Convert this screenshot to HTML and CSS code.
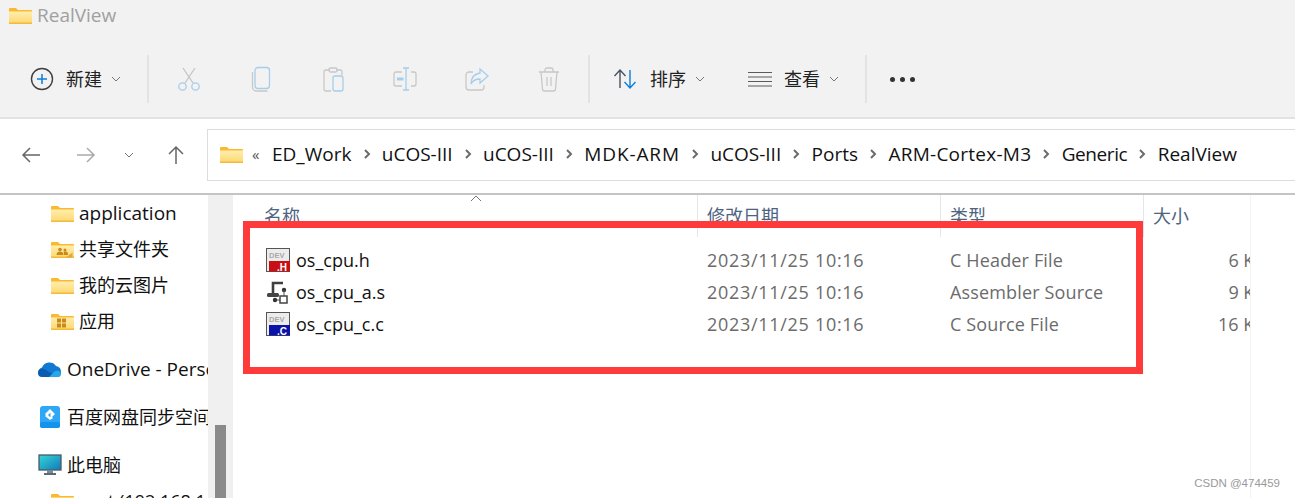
FILE: index.html
```html
<!DOCTYPE html>
<html lang="zh">
<head>
<meta charset="utf-8">
<title>RealView</title>
<link rel="stylesheet" href="styles.css">
</head>
<body>
<svg class="defs" aria-hidden="true">
  <defs>
    <linearGradient id="fg" x1="0" y1="0" x2="0" y2="1"><stop offset="0" stop-color="#ffeeb0"/><stop offset="1" stop-color="#fdd86f"/></linearGradient>
    <linearGradient id="scr" x1="0" y1="0" x2="1" y2="1"><stop offset="0" stop-color="#35d6d8"/><stop offset="1" stop-color="#1278b8"/></linearGradient>
    <symbol id="folder" viewBox="0 0 23 17">
      <path d="M0 2a1 1 0 0 1 1-1h6l2 2h13a1 1 0 0 1 1 1v12a1 1 0 0 1-1 1H1a1 1 0 0 1-1-1z" fill="#fbb92e"/>
      <path d="M0 4.500h23V15.500a1 1 0 0 1-1 1H1a1 1 0 0 1-1-1z" fill="url(#fg)"/>
      <rect y="15.500" width="23" height="1.500" fill="#f5b93c"/>
    </symbol>
    <symbol id="chev" viewBox="0 0 8 12"><path d="M2 2l4 4-4 4" fill="none" stroke="#6b6b6b" stroke-width="2"/></symbol>
    <symbol id="down" viewBox="0 0 10 6"><path d="M1 1l4 4 4-4" fill="none" stroke="#777" stroke-width="1"/></symbol>
  </defs>
</svg>

<div class="ribbon">
  <div class="title">
    <svg class="ic-folder"><use href="#folder"/></svg>
    <span>RealView</span>
  </div>
  <div class="tools">
    <div class="tool tool-new">
      <svg class="ic24" viewBox="0 0 24 24"><circle cx="12" cy="12" r="10.500" fill="none" stroke="#3f3f3f" stroke-width="1.400"/><path d="M12 7v10M7 12h10" stroke="#0f7fd6" stroke-width="1.500"/></svg>
      <span>新建</span>
      <svg class="ic-down"><use href="#down"/></svg>
    </div>
    <i class="sep"></i>
    <div class="icons">
      <div class="icon-btn"><svg class="ic26" viewBox="0 0 26 26"><path d="M7 2l10 15M19 2L9 17" fill="none" stroke="#c4c4c4" stroke-width="1.300"/><circle cx="6.500" cy="20.500" r="3.700" fill="none" stroke="#a5cdec" stroke-width="1.300"/><circle cx="19.500" cy="20.500" r="3.700" fill="none" stroke="#a5cdec" stroke-width="1.300"/></svg></div>
      <div class="icon-btn"><svg class="ic26" viewBox="0 0 26 26"><path d="M4.500 6v15a4 4 0 0 0 4 4h11" fill="none" stroke="#c8c8c8" stroke-width="1.300"/><rect x="7" y="1.500" width="14.500" height="21" rx="3" fill="none" stroke="#a5cdec" stroke-width="1.300"/></svg></div>
      <div class="icon-btn"><svg class="ic26" viewBox="0 0 26 26"><path d="M10 4H6a2 2 0 0 0-2 2v17a2 2 0 0 0 2 2h5M16 4h4a2 2 0 0 1 2 2v3" fill="none" stroke="#c8c8c8" stroke-width="1.300"/><rect x="9" y="2" width="8" height="4" rx="1.500" fill="none" stroke="#c8c8c8" stroke-width="1.300"/><rect x="13" y="10" width="10" height="15" rx="2" fill="none" stroke="#a5cdec" stroke-width="1.300"/></svg></div>
      <div class="icon-btn"><svg class="ic26" viewBox="0 0 26 26"><path d="M10 6H4a2 2 0 0 0-2 2v10a2 2 0 0 0 2 2h6M19 6h3a2 2 0 0 1 2 2v10a2 2 0 0 1-2 2h-3" fill="none" stroke="#c8c8c8" stroke-width="1.300"/><path d="M11 2h6M14 2v22M11 24h6" fill="none" stroke="#a5cdec" stroke-width="1.300"/><rect x="5" y="11.500" width="6.500" height="3" fill="#a5cdec"/></svg></div>
      <div class="icon-btn"><svg class="ic26" viewBox="0 0 26 26"><path d="M9 6H5a3 3 0 0 0-3 3v12a3 3 0 0 0 3 3h12a3 3 0 0 0 3-3v-2" fill="none" stroke="#c8c8c8" stroke-width="1.300"/><path d="M16 3l8 7-8 7v-4c-4 0-7 1-9 5 0-6 3-10 9-11z" fill="none" stroke="#a5cdec" stroke-width="1.300"/></svg></div>
      <div class="icon-btn"><svg class="ic26" viewBox="0 0 26 26"><path d="M3 6h20M9 6V4a2 2 0 0 1 2-2h4a2 2 0 0 1 2 2v2M5 6l1.500 17a2 2 0 0 0 2 2h9a2 2 0 0 0 2-2L21 6M11 11v9M15 11v9" fill="none" stroke="#c8c8c8" stroke-width="1.300"/></svg></div>
    </div>
    <i class="sep"></i>
    <div class="tool tool-sort">
      <svg class="ic26" viewBox="0 0 26 26"><path d="M7 22V4M1.500 10L7 4l5.500 6" fill="none" stroke="#4a5560" stroke-width="1.400"/><path d="M17 4v18M11.500 16l5.500 6 5.500-6" fill="none" stroke="#0f7fd6" stroke-width="1.400"/></svg>
      <span>排序</span>
      <svg class="ic-down"><use href="#down"/></svg>
    </div>
    <div class="tool tool-view">
      <svg class="ic24" viewBox="0 0 24 24"><path d="M0 5.500h24M0 10h24M0 14.500h24M0 19h24" fill="none" stroke="#5a5a5a" stroke-width="1"/></svg>
      <span>查看</span>
      <svg class="ic-down"><use href="#down"/></svg>
    </div>
    <i class="sep"></i>
    <div class="more"><b></b><b></b><b></b></div>
  </div>
</div>

<div class="nav">
  <div class="nav-btns">
    <svg class="nav-back" viewBox="0 0 20 20"><path d="M19 10H2M9 3l-7 7 7 7" fill="none" stroke="#666" stroke-width="1.500"/></svg>
    <svg class="nav-fwd" viewBox="0 0 20 20"><path d="M1 10h17M11 3l7 7-7 7" fill="none" stroke="#aaa" stroke-width="1.500"/></svg>
    <svg class="nav-hist"><use href="#down"/></svg>
    <svg class="nav-up" viewBox="0 0 20 20"><path d="M10 19V2M3 9l7-7 7 7" fill="none" stroke="#666" stroke-width="1.500"/></svg>
  </div>
  <div class="address">
    <svg class="ic-folder addr-folder"><use href="#folder"/></svg>
    <span class="overflow">«</span>
    <div class="crumbs">
      <span>ED_Work</span><svg class="ic-chev"><use href="#chev"/></svg>
      <span>uCOS-III</span><svg class="ic-chev"><use href="#chev"/></svg>
      <span>uCOS-III</span><svg class="ic-chev"><use href="#chev"/></svg>
      <span class="crumb-mdk">MDK-ARM</span><svg class="ic-chev"><use href="#chev"/></svg>
      <span>uCOS-III</span><svg class="ic-chev"><use href="#chev"/></svg>
      <span>Ports</span><svg class="ic-chev"><use href="#chev"/></svg>
      <span class="crumb-arm">ARM-Cortex-M3</span><svg class="ic-chev"><use href="#chev"/></svg>
      <span class="crumb-gen">Generic</span><svg class="ic-chev"><use href="#chev"/></svg>
      <span>RealView</span>
    </div>
  </div>
</div>

<div class="content">
  <aside class="side">
    <div class="item sub"><svg class="ic-folder"><use href="#folder"/></svg><span class="latin">application</span></div>
    <div class="item sub"><svg class="ic-folder"><use href="#folder"/><path d="M15 16.500h6.500v-5z" fill="#e0a93f"/><circle cx="9" cy="8.500" r="1.800" fill="#c98a1a"/><circle cx="14" cy="9" r="1.500" fill="#c98a1a"/><path d="M5.500 14c0-2.500 1.500-3.500 3.500-3.500s3.500 1 3.500 3.500zM13 14c0-2-.5-3 0-3.500h1.500c2 0 2.500 1.500 2.500 3.500z" fill="#c98a1a"/></svg><span>共享文件夹</span></div>
    <div class="item sub"><svg class="ic-folder"><use href="#folder"/></svg><span>我的云图片</span></div>
    <div class="item sub gap-after"><svg class="ic-folder"><use href="#folder"/><path d="M6 5.500h4v4H6zM11 5.500h4v4h-4zM6 10.500h4v4H6zM11 10.500h4v4h-4z" fill="#c98a1a"/></svg><span>应用</span></div>
    <div class="item top gap-after"><svg class="ic-top" viewBox="0 0 24 24"><path d="M5 20a5 5 0 0 1-1-9.500A8 8 0 0 1 18 9a6 6 0 0 1 5 6 5 5 0 0 1-3 5z" fill="#1279d3"/><path d="M0 16a4 4 0 0 1 6-4l14 8H4a4 4 0 0 1-4-4z" fill="#0a5cb0"/><path d="M11 20l6-6c3-1 6 0 6 3 0 1-1 3-3 3z" fill="#27a6ea"/></svg><span class="latin">OneDrive - Personal</span></div>
    <div class="item top gap-after"><svg class="ic-top" viewBox="0 0 24 24"><rect x="2" y="1" width="20" height="22" rx="3" fill="#2ea7f7"/><rect x="2" y="17" width="20" height="6" rx="2" fill="#1592ea"/><path d="M12 4l5 5-3 3-2-2 1-1-1-1-3 3-2-2zM12 15l-5-4 2-2 3 3 1-1 2 2z" fill="#fff"/></svg><span>百度网盘同步空间</span></div>
    <div class="item top"><svg class="ic-top" viewBox="0 0 24 22"><rect x="1" y="1" width="22" height="15" fill="url(#scr)" stroke="#4a5a68" stroke-width="1.300"/><rect x="9" y="16" width="6" height="3" fill="#7a8a96"/><rect x="6" y="19" width="12" height="2" fill="#5c6a74"/></svg><span>此电脑</span></div>
    <div class="item sub"><svg class="ic-folder"><use href="#folder"/></svg><span>root (192.168.1.1)</span></div>
  </aside>
  <div class="scrollbar"><div class="thumb"></div></div>
  <main class="main">
    <div class="cols">
      <svg class="sort-caret" viewBox="0 0 12 6"><path d="M1 6l5-5 5 5" fill="none" stroke="#777"/></svg>
      <div class="row head">
        <div class="cell">名称</div>
        <div class="cell">修改日期</div>
        <div class="cell">类型</div>
        <div class="cell">大小</div>
      </div>
      <div class="row file">
        <div class="cell name"><svg class="ic-file" viewBox="0 0 24 24"><rect x=".5" y=".5" width="23" height="23" fill="#ececec" stroke="#555"/><text class="dev" x="3" y="10">DEV</text><rect x="3" y="13" width="21" height="10.500" fill="#c80f14"/><text class="ext" x="11" y="22.500">.H</text></svg><span>os_cpu.h</span></div>
        <div class="cell date">2023/11/25 10:16</div>
        <div class="cell type">C Header File</div>
        <div class="cell size">6 KB</div>
      </div>
      <div class="row file">
        <div class="cell name"><svg class="ic-file" viewBox="0 0 24 24"><path d="M17 3H7v11" fill="none" stroke="#3f3f3f" stroke-width="2.600"/><rect x="1" y="13" width="12" height="4" rx="1.500" fill="#444"/><circle cx="18" cy="10" r="2.200" fill="#333"/><path d="M18 10v7M8 20h7" stroke="#555"/><circle cx="9" cy="20" r="2.200" fill="#333"/><rect x="14" y="16" width="7" height="7" fill="#fff" stroke="#444" stroke-width="1.500"/></svg><span>os_cpu_a.s</span></div>
        <div class="cell date">2023/11/25 10:16</div>
        <div class="cell type">Assembler Source</div>
        <div class="cell size">9 KB</div>
      </div>
      <div class="row file">
        <div class="cell name"><svg class="ic-file" viewBox="0 0 24 24"><rect x=".5" y=".5" width="23" height="23" fill="#ececec" stroke="#555"/><text class="dev" x="3" y="10">DEV</text><rect x="3" y="13" width="21" height="10.500" fill="#0b12a8"/><text class="ext" x="11" y="22.500">.C</text></svg><span>os_cpu_c.c</span></div>
        <div class="cell date">2023/11/25 10:16</div>
        <div class="cell type">C Source File</div>
        <div class="cell size">16 KB</div>
      </div>
    </div>
    <div class="preview"></div>
    <div class="highlight"></div>
    <div class="mark">CSDN @474459</div>
  </main>
</div>
</body>
</html>
```
FILE: styles.css
```css
* { box-sizing: border-box; }
html, body { margin: 0; height: 498px; overflow: hidden; }
body { background: #fff; color: #111; font: 18px/24px "Open Sans", "Noto Sans CJK SC", sans-serif; }
.defs { position: absolute; width: 0; height: 0; }
svg { flex: none; display: block; }

.ribbon { height: 119px; background: #f2f2f2; border-bottom: 2px solid #e2e2e2; }
.title { height: 30px; padding-left: 9px; display: flex; align-items: center; gap: 5px; color: #a0a0a0; font-size: 19px; }
.ic-folder { width: 23px; height: 17px; overflow: visible; }
.tools { height: 48px; margin-top: 25px; padding-left: 30px; display: flex; align-items: center; }
.tool { display: flex; align-items: center; }
.tool span { color: #222; }
.tool-new { width: 117px; }
.tool-new span { margin: 0 9px 0 12px; }
.ic24 { width: 24px; height: 24px; }
.ic26 { width: 26px; height: 26px; }
.ic-down { width: 10px; height: 6px; }
.sep { width: 2px; height: 48px; background: #e3e3e3; }
.icons { display: flex; margin: 0 3px; padding-left: 1px; }
.icon-btn { width: 72px; display: flex; justify-content: center; }
.tool-sort { margin-left: 23px; width: 135px; }
.tool-sort span { margin: 0 9px 0 11px; }
.tool-view { width: 117px; }
.tool-view span { margin: 0 9px 0 12px; }
.more { display: flex; gap: 5px; margin-left: 23px; }
.more b { width: 5px; height: 5px; border-radius: 50%; background: #333; }

.nav { height: 76px; display: flex; align-items: flex-start; padding-top: 10px; border-bottom: 2px solid #c4c4c4; }
.nav-btns { width: 207px; height: 51px; padding-left: 21px; display: flex; align-items: center; }
.nav-back, .nav-fwd, .nav-up { width: 20px; height: 20px; }
.nav-fwd { margin-left: 35px; }
.nav-hist { width: 10px; height: 6px; margin-left: 28px; }
.nav-up { margin-left: 32px; }
.address { flex: 1; height: 52px; border: 1px solid #dcdcdc; border-right: 0; display: flex; align-items: center; padding: 0 0 3px 12px; }
.addr-folder { margin-top: 2px; }
.overflow { margin-left: 9px; width: 20px; font-size: 15px; color: #555; }
.crumbs { display: flex; align-items: center; gap: 11.200px; font-size: 19px; color: #111; }
.crumb-mdk { letter-spacing: .9px; }
.crumb-arm { letter-spacing: .25px; }
.crumb-gen { letter-spacing: -.4px; }
.ic-chev { width: 8px; height: 12px; }

.content { height: 303px; display: flex; overflow: hidden; }
.side { width: 208px; overflow: hidden; flex: none; }
.item { height: 36px; display: flex; align-items: center; white-space: nowrap; color: #111; }
.item.sub { padding-left: 51px; gap: 5px; }
.item.top { padding-left: 38px; }
.item.gap-after { margin-bottom: 12px; }
.latin { font-size: 19px; }
.ic-top { width: 24px; height: 24px; margin-right: 5px; }
.scrollbar { width: 25px; flex: none; background: #f0f0f0; padding: 230px 7px 0; }
.thumb { height: 73px; background: #8a8a8a; }

.main { flex: 1; display: flex; min-width: 0; }
.cols { position: relative; width: 1017px; overflow: hidden; flex: none; }
.row { display: grid; grid-template-columns: 465px 243px 203px 124px; white-space: nowrap; }
.head { height: 40px; margin-bottom: 9px; color: #4d6480; line-height: 42px; }
.head .cell { padding-left: 9px; border-right: 1px solid #e6e6e6; }
.head .cell:first-child { padding-left: 31px; }
.file { height: 32px; line-height: 32px; color: #6b6b6b; }
.file .cell { padding-left: 9px; }
.file .name { padding-left: 33px; display: flex; align-items: center; gap: 6px; color: #111; }
.file .date { letter-spacing: .7px; }
.file .type { letter-spacing: .15px; }
.file .size { padding: 0 2px 0 0; text-align: right; }
.ic-file { width: 24px; height: 24px; }
.dev { font: 700 7.500px "Liberation Sans", sans-serif; fill: #a8a8a8; }
.ext { font: 700 10px "Liberation Sans", sans-serif; fill: #fff; }
.sort-caret { position: absolute; left: 237px; top: 0; width: 12px; height: 6px; }
.preview { flex: 1; border-left: 1px solid #f3f3f3; }
.highlight { position: absolute; left: 243px; top: 221px; width: 900px; height: 153px; border: 7px solid #ff3a3a; }
.mark { position: absolute; right: 15px; top: 476px; font: 11.500px/14px "Liberation Sans", sans-serif; color: #9a9a9a; }
```
